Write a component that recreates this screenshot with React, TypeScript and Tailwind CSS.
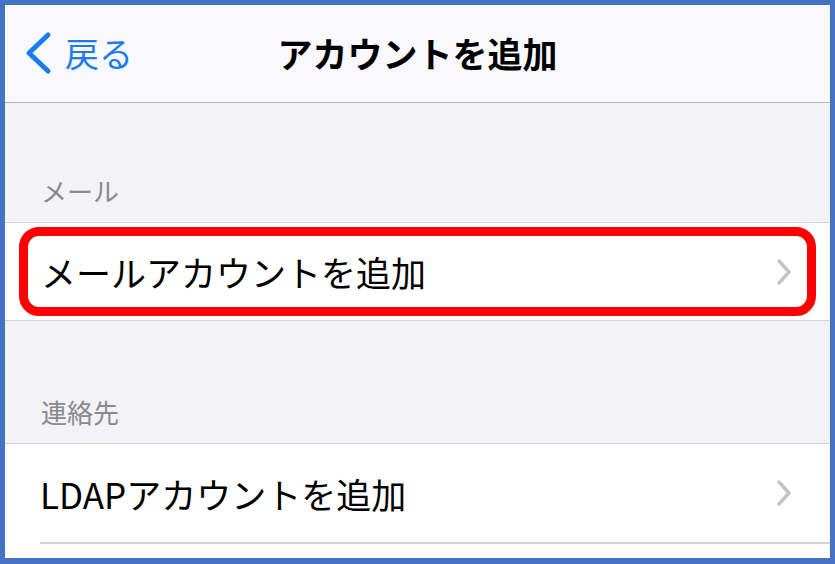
import React from 'react';

const FONT = { fontFamily: '"Noto Sans CJK JP", "Noto Sans", sans-serif' };

const Chevron = () => (
    <svg width="20" height="28" viewBox="0 0 20 28" className="shrink-0">
        <path d="M5 3 L15 14 L5 25" fill="none" stroke="#c4c4c8" strokeWidth="3.5" strokeLinecap="round" strokeLinejoin="round" />
    </svg>
);

const SectionHeader = ({ label, h }: { label: string; h: string }) => (
    <div className={`${h} shrink-0 bg-[#f2f2f7] border-b border-[#d1d1d6] flex items-end px-[36px] pb-[18px]`}>
        <span className="text-[26px] leading-[26px] text-[#8a8a8e]">{label}</span>
    </div>
);

const App = () => {
    return (
        <div
            className="w-[835px] h-[564px] border-[5px] border-b-[6px] border-[#4472c4] bg-white overflow-hidden flex flex-col"
            style={FONT}
        >
            {/* nav bar */}
            <div className="h-[98px] shrink-0 bg-[#f9f9fb] border-b border-[#b4b4b8] relative flex items-center justify-center">
                <div className="absolute left-[18px] top-0 bottom-0 flex items-center gap-[12px] pb-[2px]">
                    <svg width="30" height="44" viewBox="0 0 30 44">
                        <path d="M25 4 L6 22 L25 40" fill="none" stroke="#1b7cf0" strokeWidth="5" strokeLinecap="round" strokeLinejoin="round" />
                    </svg>
                    <span className="text-[34px] text-[#1b7cf0] leading-none">戻る</span>
                </div>
                <span className="text-[35px] font-bold text-black leading-none pb-[2px]">アカウントを追加</span>
            </div>

            <SectionHeader label="メール" h="h-[120px]" />

            <div className="h-[98px] shrink-0 bg-white border-b border-[#d1d1d6] relative flex items-center pl-[36px] pr-[36px]">
                <span className="flex-1 text-[35px] leading-none text-black">メールアカウントを追加</span>
                <Chevron />
                <div className="absolute left-[14px] top-[4px] w-[797px] h-[89px] border-[9px] border-[#ff0000] rounded-[20px]" />
            </div>

            <SectionHeader label="連絡先" h="h-[123px]" />

            <div className="h-[98px] shrink-0 bg-white flex items-center pl-[35px] pr-[36px]">
                <span className="flex-1 text-[35px] leading-none text-black">LDAPアカウントを追加</span>
                <Chevron />
            </div>
            <div className="ml-[35px] border-b-2 border-[#d1d1d6]" />
            <div className="flex-1 bg-white" />
        </div>
    );
};

export default App;
